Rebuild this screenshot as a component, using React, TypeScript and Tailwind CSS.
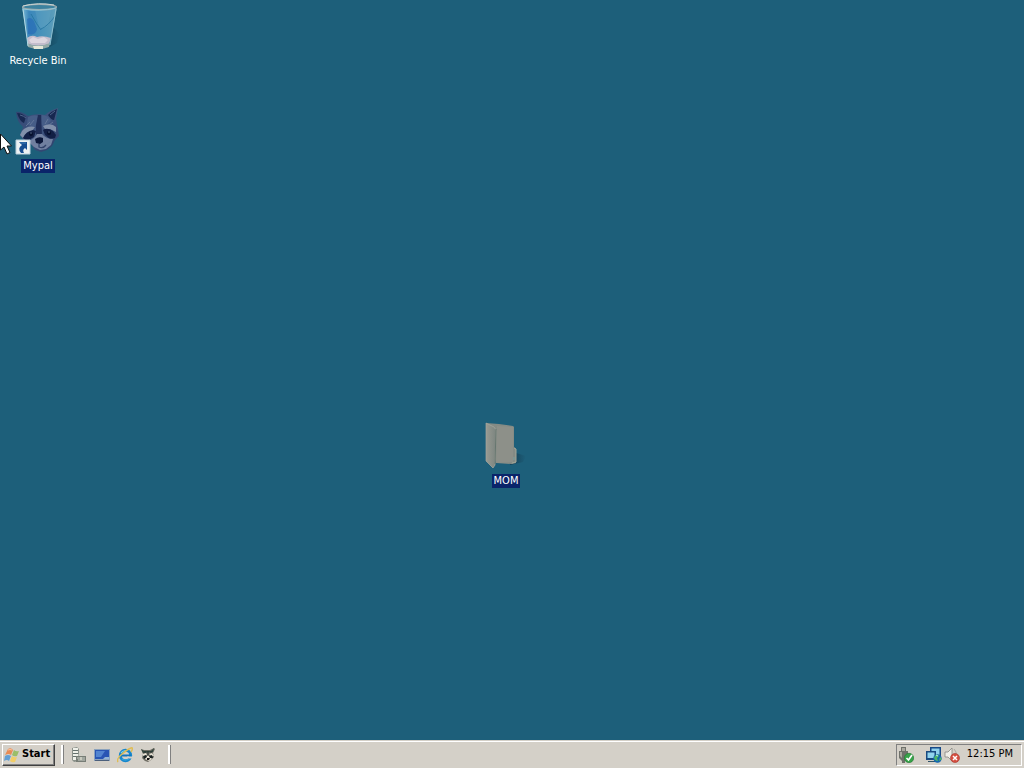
import type { ReactNode } from 'react';

function RecycleBinIcon() {
  return (
    <svg className="block size-12" viewBox="0 0 48 48" aria-hidden="true">
      <defs>
        <linearGradient id="glass" x1="0" x2="1" y1="0" y2="0">
          <stop offset="0" stopColor="#7fbdd6" />
          <stop offset=".2" stopColor="#3a86bb" />
          <stop offset=".6" stopColor="#4a94ba" />
          <stop offset="1" stopColor="#5f9fba" />
        </linearGradient>
        <linearGradient id="binShade" x1="0" x2="1" y1="0" y2="0">
          <stop offset="0" stopColor="#123f55" stopOpacity=".6" />
          <stop offset="1" stopColor="#123f55" stopOpacity="0" />
        </linearGradient>
      </defs>
      <path d="M36 22 46 32 43 41 34 46Z" fill="url(#binShade)" />
      <path d="M8 5 43 5 36 43Q25 48 14 43Z" fill="url(#glass)" />
      <path d="M13 17Q17 14 20 19L23 27Q22 34 14 32Z" fill="#2368b5" opacity=".6" />
      <path d="M21 8H37L34 24Q29 28 25 25Z" fill="#6baac8" opacity=".3" />
      <path d="M41 14Q34 24 27 27M17 12Q23 23 27 28" stroke="#22719d" strokeWidth="1" fill="none" opacity=".75" />
      <path d="M13 36Q18 32 23 35Q29 33 37 36L35 42Q24 46 14 42Z" fill="#c3bdcc" />
      <path d="M15 38 19 35 24 37 30 35 34 38 31 41 17 41Z" fill="#ddd6df" />
      <path d="M13 41Q24 46 36 41L35 45Q25 49 14 45Z" fill="#93a9a6" />
      <path d="M19 44 29 44 29 47 20 47Z" fill="#e3e7d6" />
      <path d="M9 7 14 44" stroke="#b3d9e2" strokeWidth="1" />
      <path d="M42 7 36 43" stroke="#8cbdcd" strokeWidth="1" />
      <ellipse cx="25.5" cy="5" rx="17" ry="2.7" fill="#3c829f" stroke="#9ca9ab" strokeWidth="1.3" />
      <path d="M9 4Q24 0 40 3" stroke="#cbd7d6" strokeWidth="1" fill="none" />
      <path d="M9 7Q25 10 42 6" stroke="#8ec5d8" strokeWidth="1" fill="none" />
    </svg>
  );
}

function RaccoonIcon() {
  return (
    <svg className="block size-12" viewBox="0 0 48 48" aria-hidden="true">
      <defs>
        <linearGradient id="fur" x1="0" x2="1" y1="0" y2="1">
          <stop offset="0" stopColor="#304471" />
          <stop offset=".5" stopColor="#405580" />
          <stop offset="1" stopColor="#293d68" />
        </linearGradient>
      </defs>
      <path d="M2 5Q7 4 14 9Q22 6 31 8Q36 3 44 1L42 12 44 22 45 29 41 33 38 39 33 43 27 45 21 43 17 37 10 34 6 28 9 20Q3 15 2 5Z" fill="url(#fur)" />
      <path d="M3 6Q8 6 12 10L10 16Q6 15 3 6ZM43 2 40 13Q37 13 34 8Q38 4 43 2Z" fill="#172850" />
      <path d="M6 8Q10 9 12 11M36 8 41 4" stroke="#4f658b" strokeWidth="1" fill="none" />
      <path d="M14 10Q20 7 24 9L23 17 19 21 13 17ZM28 8Q34 8 37 14L30 20 27 17Z" fill="#465d87" />
      <path d="M24 8H27L28 28 25 31 22 27 22 18Z" fill="#202f59" />
      <path d="M8 24Q13 18 21 20L18 24 12 27 9 31 6 28ZM29 19Q37 15 42 20L42 25 36 22 31 22Z" fill="#8190aa" />
      <path d="M9 31Q12 24 19 23L22 24 20 30 13 34ZM29 23Q33 20 39 24L42 28 41 31 36 32 31 28Z" fill="#121f45" />
      <circle cx="17" cy="27" r="2" fill="#07112e" />
      <circle cx="35" cy="26" r="2" fill="#07112e" />
      <path d="M16 26H18M34 25H36" stroke="#64789b" strokeWidth=".8" />
      <path d="M14 34Q21 32 23 27L28 27Q32 32 39 32L37 38 32 42 26 43 20 40Z" fill="#7180a0" />
      <path d="M21 32Q25 29 29 31L29 35 26 37 22 36Z" fill="#0b1739" />
      <path d="M25 37V40Q29 42 32 38" stroke="#31426a" strokeWidth="1.3" fill="none" />
      <path d="M12 19 16 15M16 18 20 13M31 17 34 12M35 18 39 15M32 38 36 35M18 38 20 35" stroke="#6a7c9d" strokeWidth=".8" />
    </svg>
  );
}

function RaccoonSmallIcon() {
  return (
    <svg className="block size-4" viewBox="0 0 16 16" aria-hidden="true">
      <path d="M1 2 4 3 10 3 14 1 15 2 13 6 14 10 11 13 8 15 5 14 2 11 3 7Z" fill="#706e65" />
      <path d="M1 2 4 4 11 4 14 1 13 5 3 6Z" fill="#33463f" />
      <path d="M3 7 6 6 7 8 3 10ZM9 7 12 6 14 9 11 9ZM5 12 7 9 9 9 12 12 9 14Z" fill="#e7e1d4" />
      <path d="M3 9 6 8 7 10 4 12ZM9 9 12 8 13 11 10 11Z" fill="#1a2223" />
      <path d="M7 11H10L9 13H7Z" fill="#111" />
      <path d="M8 4V8M5 4V6M11 4V6" stroke="#293532" />
    </svg>
  );
}

function ShortcutArrow() {
  return (
    <svg className="absolute bottom-0 left-px size-4" viewBox="0 0 16 16" aria-hidden="true">
      <path d="M1 1H15V15H1Z" fill="#edf1f3" stroke="#b9d0dc" />
      <path d="M4 3H12V11L10 9Q7 11 9 14H6Q2 9 7 6Z" fill="#174d91" />
      <path d="M5 4H11" stroke="#4280b7" />
    </svg>
  );
}

function FolderIcon() {
  return (
    <svg className="block size-12" viewBox="0 0 48 48" aria-hidden="true">
      <defs>
        <linearGradient id="folderFront" x1="0" x2="1" y1="0" y2="0">
          <stop offset="0" stopColor="#989a92" />
          <stop offset="1" stopColor="#7c8580" />
        </linearGradient>
        <linearGradient id="folderShade" x1="0" x2="1" y1="0" y2="0">
          <stop offset="0" stopColor="#153e54" />
          <stop offset="1" stopColor="#153e54" stopOpacity="0" />
        </linearGradient>
      </defs>
      <path d="M31 30 44 34 41 40 28 43Z" fill="url(#folderShade)" />
      <path d="M4 1 17 2 31 4 32 5 32 25 34 27 34 41 30 42 14 41Z" fill="#858b85" />
      <path d="M15 4 31 5 31 40 14 41Z" fill="#8d9089" />
      <path d="M4 1 12 5 14 8 13 43 11 46 4 39Z" fill="url(#folderFront)" stroke="#a7a79d" strokeWidth=".7" />
      <path d="M14 7 13 42" stroke="#66766f" />
      <path d="M32 26 34 27 34 40 30 41" fill="none" stroke="#a2a698" />
      <path d="M32 35V38" stroke="#78a1a1" />
    </svg>
  );
}

function WindowsFlag() {
  return (
    <svg className="size-4 shrink-0" viewBox="0 0 16 16" aria-hidden="true">
      <path d="M4 2Q7 0 9 3L7 8Q5 6 1 8Z" fill="#e88b54" />
      <path d="M10 3Q12 5 15 4L13 9Q10 10 8 8Z" fill="#9bbe69" />
      <path d="M1 9Q4 7 7 9L5 14Q3 12 0 14Z" fill="#629fd4" />
      <path d="M8 9Q10 11 13 10L11 15Q8 16 6 14Z" fill="#f2ce67" />
      <path d="M4 3Q6 2 8 3" stroke="#ffc59c" fill="none" />
    </svg>
  );
}

function ServerIcon() {
  return (
    <svg className="size-4" viewBox="0 0 16 16" aria-hidden="true">
      <path d="M1 1 6 0 8 2V14L3 15 1 13Z" fill="#8a918a" />
      <path d="M2 1H7V13H2Z" fill="#eef0e9" />
      <path d="M2 3.5H7M2 6.5H7M2 9.5H7" stroke="#65716d" />
      <path d="M5 9H15V15H5Z" fill="#777d76" />
      <path d="M8 9V7H12V9M6 11H14M7 13H14" stroke="#cbd0c7" fill="none" />
      <path d="M10 10V13" stroke="#eeeede" />
    </svg>
  );
}

function DesktopIcon() {
  return (
    <svg className="size-4" viewBox="0 0 16 16" aria-hidden="true">
      <path d="M0 2H16V14H0Z" fill="#8ba2bd" />
      <path d="M1 3H15V12H1Z" fill="#2855b4" />
      <path d="M2 4H11L7 10H2Z" fill="#5284d0" />
      <path d="M11 10H15V12H9Z" fill="#91b4d6" />
      <path d="M1 13.5H15" stroke="#4c607c" />
    </svg>
  );
}

function ExplorerIcon() {
  return (
    <svg className="size-4" viewBox="0 0 16 16" aria-hidden="true">
      <circle cx="8.5" cy="8.5" r="5.2" fill="none" stroke="#1687cd" strokeWidth="3" />
      <path d="M4 8.5H14" stroke="#1175bf" strokeWidth="2" />
      <path d="M10 9.5H16V11.5H10Z" fill="#d4d0c8" />
      <path d="M4 6Q6 3 9 4" stroke="#7fd3ee" strokeWidth="1.2" fill="none" />
      <path d="M1 15Q-1 12 5 7T14 1Q17 0 14 5" fill="none" stroke="#dfbd55" strokeWidth="1.5" />
      <path d="M5 12Q8 14 12 12" fill="none" stroke="#36a3d9" strokeWidth="1.3" />
    </svg>
  );
}

function SafeRemoveIcon() {
  return (
    <svg className="size-4" viewBox="0 0 16 16" aria-hidden="true">
      <path d="M3 0H8V4H10V12L7 14V16H4V14L1 11V4H3Z" fill="#6f716b" />
      <path d="M4 1H7V4H4ZM2 5H4V11L2 9Z" fill="#aaa99f" />
      <circle cx="11" cy="11" r="4.7" fill="#36a348" stroke="#227431" strokeWidth=".6" />
      <path d="m8.5 11 2 2 3.5-5" fill="none" stroke="#fff" strokeWidth="1.7" />
    </svg>
  );
}

function NetworkIcon() {
  return (
    <svg className="size-4" viewBox="0 0 16 16" aria-hidden="true">
      <path d="M4 0H15V10H4Z" fill="#194a88" />
      <path d="M5.5 1.5H13.5V8H5.5Z" fill="#8fd0ec" />
      <path d="M0 4H10V13H0Z" fill="#194a80" />
      <path d="M1.5 5.5H8.5V11H1.5Z" fill="#93d4ee" />
      <path d="M2 14.5H9" stroke="#30536a" />
      <circle cx="11.5" cy="11.5" r="4.2" fill="#1668ae" />
      <path d="M9 9Q11 6 13 9L11 11 12 14Q9 14 8 11ZM14 10 16 12 13 14Z" fill="#4cb465" />
      <path d="M10 8 12 9" stroke="#b9ecf7" />
    </svg>
  );
}

function MutedIcon() {
  return (
    <svg className="size-4" viewBox="0 0 16 16" aria-hidden="true">
      <path d="M1 5H4L8 1V14L4 10H1Z" fill="#f0efe8" stroke="#858780" strokeWidth=".8" />
      <path d="M10 2Q13 5 12 8" stroke="#aaa9a1" fill="none" />
      <circle cx="11" cy="11" r="4.5" fill="#d65042" stroke="#a6372f" strokeWidth=".6" />
      <path d="m9 9 4 4m0-4-4 4" stroke="#fff" strokeWidth="1.5" />
    </svg>
  );
}

function Shortcut({ label, selected = false, className, children }: { label: string; selected?: boolean; className: string; children: ReactNode }) {
  return (
    <button className={`absolute flex w-19 flex-col items-center gap-1 ${className}`}>
      <span className="relative">{children}</span>
      <span className={`px-0.5 leading-[14px] whitespace-nowrap ${selected ? 'bg-[#0a246a]' : ''}`}>{label}</span>
    </button>
  );
}

function Divider() {
  return <div className="h-[19px] w-[3px] border-r border-[#808080] bg-white" />;
}

export default function App() {
  return (
    <div className="flex min-h-screen flex-col bg-[#1d5f7a] font-['DejaVu_Sans_Condensed','DejaVu_Sans',sans-serif] text-[11px] text-white">
      <main className="relative grow overflow-hidden">
        <Shortcut label="Recycle Bin" className="top-0.5 left-0"><RecycleBinIcon /></Shortcut>
        <Shortcut label="Mypal" selected className="top-[107px] left-0"><RaccoonIcon /><ShortcutArrow /></Shortcut>
        <Shortcut label="MOM" selected className="top-[422px] left-[468px]"><FolderIcon /></Shortcut>
        <svg className="absolute top-[133px] left-0 h-[22px] w-3" viewBox="0 0 12 22" aria-hidden="true">
          <path d="M.5 1V17L4 14 7 21 10 19.5 7 13H11.5Z" fill="#fff" stroke="#111" />
        </svg>
      </main>

      <footer className="flex h-7 items-center border-t border-[#d4d0c8] bg-[#d4d0c8] px-0.5 text-black shadow-[inset_0_1px_#fff]">
        <button className="flex h-[22px] w-[53px] items-center gap-0.5 border border-t-white border-r-[#404040] border-b-[#404040] border-l-white pl-px font-bold shadow-[inset_-1px_-1px_#808080]">
          <WindowsFlag />Start
        </button>
        <nav aria-label="Quick Launch" className="ml-1.5 flex items-center">
          <Divider />
          <div className="mr-3 ml-[7px] flex gap-[7px]">
            <button aria-label="Server Manager"><ServerIcon /></button>
            <button aria-label="Show Desktop"><DesktopIcon /></button>
            <button aria-label="Internet Explorer"><ExplorerIcon /></button>
            <button aria-label="Mypal"><RaccoonSmallIcon /></button>
          </div>
          <Divider />
        </nav>
        <div className="ml-auto flex h-[22px] items-center border border-t-[#808080] border-r-white border-b-white border-l-[#808080] pr-2 pl-px">
          <button aria-label="Safely Remove Hardware" className="mr-3"><SafeRemoveIcon /></button>
          <button aria-label="Network" className="mr-0.5"><NetworkIcon /></button>
          <button aria-label="Volume muted" className="mr-[7px]"><MutedIcon /></button>
          <time dateTime="12:15" className="whitespace-nowrap">12:15 PM</time>
        </div>
      </footer>
    </div>
  );
}
